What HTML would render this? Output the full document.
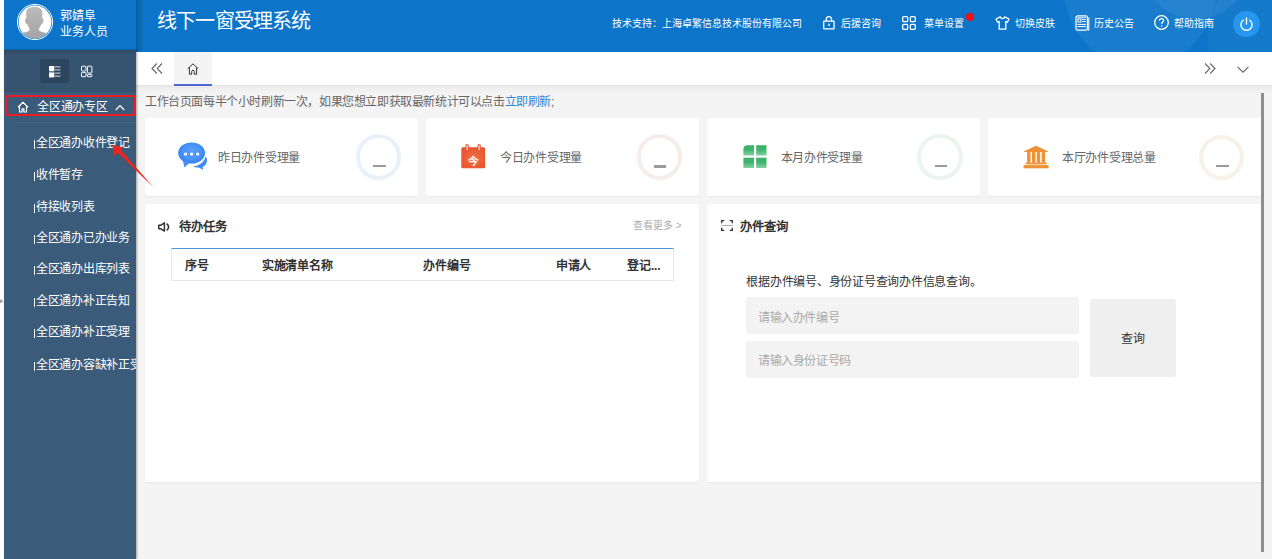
<!DOCTYPE html>
<html lang="zh-CN"><head><meta charset="utf-8">
<style>
*{margin:0;padding:0;box-sizing:border-box;}
html,body{width:1272px;height:559px;overflow:hidden;background:#fff;font-family:"Liberation Sans",sans-serif;position:relative;}
.abs{position:absolute;}
svg{position:absolute;overflow:visible;}
#hdr{position:absolute;left:4px;top:0;width:1268px;height:52px;background:#0c75c9;overflow:hidden;}
#side{position:absolute;left:4px;top:50px;width:132px;height:509px;background:#3a5b79;overflow:hidden;box-shadow:1px 0 2px rgba(0,0,0,0.35);z-index:2;}
#tabs{position:absolute;left:136px;top:52px;width:1136px;height:33px;background:#fff;z-index:1;}
#main{position:absolute;left:136px;top:85px;width:1136px;height:474px;background:#f4f4f4;overflow:hidden;}
.t{position:absolute;white-space:nowrap;line-height:1;}
.hw{color:#fff;font-size:10px;margin-top:1px;}
.mi{position:absolute;left:30px;color:#fff;font-size:12px;letter-spacing:-0.25px;white-space:nowrap;line-height:1;}
.mi:before{content:"";position:absolute;left:0;top:3px;width:1.2px;height:9px;background:#fff;}
.mi span{margin-left:1.8px;}
.card{position:absolute;background:#fff;border-radius:3px;box-shadow:0 1px 1px rgba(0,0,0,0.05);}
.ring{position:absolute;width:45.5px;height:45.5px;border-radius:50%;border:4px solid #e7f1fa;}
.dash{position:absolute;width:12.7px;height:2.6px;background:#9a9a9a;}
.ct{position:absolute;font-size:12px;letter-spacing:-0.3px;color:#666;white-space:nowrap;line-height:1;}
.th{position:absolute;font-size:12px;letter-spacing:-0.2px;color:#333;font-weight:bold;white-space:nowrap;line-height:1;}
</style></head><body>
<div class="abs" style="left:0;top:0;width:4px;height:559px;background:#fdfdfd;"></div>
<div id="hdr">
  <div class="abs" style="left:1060px;top:-86px;width:152px;height:152px;border-radius:50%;background:rgba(255,255,255,0.055);"></div>
  <div class="abs" style="left:1204px;top:-44px;width:168px;height:168px;border-radius:50%;background:rgba(255,255,255,0.045);"></div>
  <div class="abs" style="left:1138px;top:-89px;width:108px;height:108px;border-radius:50%;background:rgba(255,255,255,0.06);"></div>
  <div class="abs" style="left:132px;top:0;width:8px;height:51px;background:linear-gradient(to right,rgba(0,0,0,0.2),rgba(0,0,0,0));"></div>
  <svg style="left:12px;top:3px" width="38" height="38" viewBox="0 0 38 38">
    <defs><linearGradient id="sg" x1="0" y1="0" x2="0" y2="1"><stop offset="0" stop-color="#bababa"/><stop offset="1" stop-color="#9f9f9f"/></linearGradient>
    <clipPath id="ac"><circle cx="19" cy="19" r="16.2"/></clipPath></defs>
    <circle cx="19" cy="19" r="17.6" fill="none" stroke="#fff" stroke-width="1"/>
    <circle cx="19" cy="19" r="16.4" fill="#fff"/>
    <g clip-path="url(#ac)"><g transform="translate(-16,-3)" fill="url(#sg)">
      <path d="M26.2 13.5C26.2 8.6 29.5 7 34.3 7S42.4 8.6 42.4 13.5L42.2 18.5C43.8 18.5 43.8 20.5 43 22.5 42.5 23.5 41.8 24 41.3 24 40.5 26.5 39.5 28 38.8 29L39 30.5C41 32 45 32.5 47 33.5L52 45H17L21.5 33.5C23.5 32.5 27.5 32 29.5 30.5L29.7 29C29 28 28 26.5 27.3 24 26.8 24 26 23.5 25.5 22.5 24.8 20.5 24.9 18.5 26.4 18.5z"/>
    </g></g>
  </svg>
  <div class="t" style="left:56px;top:7.5px;font-size:12px;color:#fff;line-height:16px;">郭婧阜<br>业务人员</div>
  <div class="t" style="left:153px;top:10.5px;font-size:20px;letter-spacing:-0.8px;color:#fff;">线下一窗受理系统</div>

  <div class="t hw" style="left:608px;top:17.5px;">技术支持：上海卓繁信息技术股份有限公司</div>
  <svg style="left:819px;top:16px" width="12" height="14" viewBox="0 0 12 14">
    <path d="M3.2 5.2V3.6C3.2 2 4.4 0.7 5.9 0.7S8.6 2 8.6 3.6v1.6" fill="none" stroke="#fff" stroke-width="1.3"/>
    <rect x="0.7" y="5.2" width="10.4" height="7.6" rx="0.6" fill="none" stroke="#fff" stroke-width="1.3"/>
    <rect x="5.3" y="7.6" width="1.3" height="2.4" fill="#fff"/>
  </svg>
  <div class="t hw" style="left:837px;top:17.5px;">后援咨询</div>
  <svg style="left:898px;top:16px" width="14" height="14" viewBox="0 0 14 14">
    <g fill="none" stroke="#fff" stroke-width="1.3">
    <rect x="0.65" y="0.65" width="5" height="5" rx="1.2"/><rect x="8.35" y="0.65" width="5" height="5" rx="1.2"/>
    <rect x="0.65" y="8.35" width="5" height="5" rx="1.2"/><rect x="8.35" y="8.35" width="5" height="5" rx="1.2"/></g>
  </svg>
  <div class="t hw" style="left:919.5px;top:17.5px;">菜单设置</div>
  <div class="abs" style="left:962.3px;top:13px;width:8px;height:8px;border-radius:50%;background:#f80e0e;"></div>
  <svg style="left:990.5px;top:16px" width="15" height="14" viewBox="0 0 15 14">
    <path d="M5.2 0.8C5.6 2 6.4 2.7 7.5 2.7S9.4 2 9.8 0.8L14 3l-1.6 3.3-1.6-.8v7.7H4.2V5.5l-1.6.8L1 3z" fill="none" stroke="#fff" stroke-width="1.3" stroke-linejoin="round"/>
  </svg>
  <div class="t hw" style="left:1010.7px;top:17.5px;">切换皮肤</div>
  <svg style="left:1070.5px;top:15px" width="16" height="16" viewBox="0 0 16 16">
    <g fill="none" stroke="#fff">
      <rect x="1" y="0.9" width="11.4" height="14.3" rx="1.6" stroke-width="1.2"/>
      <path d="M13.8 2.6v11.6a1 1 0 0 1-1 1" stroke-width="1.1"/>
      <path d="M2.4 2.7h8.6" stroke-width="0.9"/>
      <rect x="2.9" y="4.1" width="3" height="2.9" stroke-width="1"/>
      <path d="M7 4.5h3.8M7 6.6h3.8" stroke-width="0.9"/>
      <path d="M2.4 9.4h8.6M2.4 11.6h8.6" stroke-width="1"/>
    </g>
  </svg>
  <div class="t hw" style="left:1090px;top:17.5px;">历史公告</div>
  <svg style="left:1150px;top:15.4px" width="15" height="15" viewBox="0 0 15 15">
    <circle cx="7.5" cy="7.5" r="6.8" fill="none" stroke="#fff" stroke-width="1.3"/>
    <path d="M5.4 5.7c0-1.3 1-2.1 2.1-2.1s2.1.8 2.1 2c0 1.6-2 1.7-2 3.3" fill="none" stroke="#fff" stroke-width="1.3"/>
    <circle cx="7.6" cy="11" r="0.8" fill="#fff"/>
  </svg>
  <div class="t hw" style="left:1170px;top:17.5px;">帮助指南</div>
  <div class="abs" style="left:1229px;top:10.5px;width:26.5px;height:26.5px;border-radius:50%;background:#2696ee;"></div>
  <svg style="left:1235px;top:16.5px" width="15" height="15" viewBox="0 0 15 15">
    <path d="M4.2 3.2A5.6 5.6 0 1 0 10.8 3.2" fill="none" stroke="#fff" stroke-width="1.4" stroke-linecap="round"/>
    <path d="M7.5 1v6" stroke="#fff" stroke-width="1.4" stroke-linecap="round"/>
  </svg>
</div>

<div id="side">
  <div class="abs" style="left:0;top:0;width:132px;height:42px;background:#36546f;"></div>
  <div class="abs" style="left:0;top:0;width:132px;height:5px;background:linear-gradient(rgba(0,0,0,0.14),rgba(0,0,0,0));"></div>
  <div class="abs" style="left:36px;top:9px;width:29px;height:24px;border-radius:3px;background:#2c4660;"></div>
  <svg style="left:44.7px;top:15.6px" width="12" height="12" viewBox="0 0 12 12">
    <rect x="0" y="0" width="5.3" height="5.3" fill="#fff"/><rect x="0" y="6.4" width="5.3" height="5" fill="#fff"/>
    <g fill="#d8dde2"><rect x="5.8" y="0.4" width="5.6" height="1"/><rect x="5.8" y="3.4" width="5.6" height="1"/><rect x="5.8" y="6.6" width="5.6" height="1"/><rect x="5.8" y="9.6" width="5.6" height="1"/></g>
  </svg>
  <svg style="left:77px;top:15px" width="12" height="13" viewBox="0 0 12 13">
    <g fill="none" stroke="#fff" stroke-width="1"><rect x="0.5" y="1.2" width="4.5" height="4.8" rx="0.7"/><rect x="0.5" y="7.4" width="4.5" height="4.3" rx="0.7"/><rect x="6.4" y="1.2" width="4.5" height="6.8" rx="0.7"/><rect x="6.4" y="9.4" width="4.5" height="2.3" rx="0.7"/></g>
  </svg>
  <div class="abs" style="left:1px;top:45px;width:131px;height:20.5px;border:2px solid #ed1c24;border-radius:3px;"></div>
  <svg style="left:13px;top:50.5px" width="12" height="12" viewBox="0 0 12 12">
    <path d="M1 6.2L6 1.3l5 4.9M2.5 4.8v6.2h2.6V7.8h1.8v3.2h2.6V4.8" fill="none" stroke="#fff" stroke-width="1.2" stroke-linejoin="round"/>
  </svg>
  <div class="t" style="left:33px;top:51.2px;font-size:12px;letter-spacing:-0.2px;color:#fff;">全区通办专区</div>
  <svg style="left:111px;top:53.5px" width="10" height="7" viewBox="0 0 10 7">
    <path d="M0.8 6L5 1.6 9.2 6" fill="none" stroke="#fff" stroke-width="1.2"/>
  </svg>
  <div class="abs" style="left:13px;top:72px;width:119px;height:1px;background:#46657f;"></div>
  <div class="mi" style="top:87.2px"><span>全区通办收件登记</span></div>
  <div class="mi" style="top:118.8px"><span>收件暂存</span></div>
  <div class="mi" style="top:150.5px"><span>待接收列表</span></div>
  <div class="mi" style="top:182.1px"><span>全区通办已办业务</span></div>
  <div class="mi" style="top:213.4px"><span>全区通办出库列表</span></div>
  <div class="mi" style="top:245.3px"><span>全区通办补正告知</span></div>
  <div class="mi" style="top:276.4px"><span>全区通办补正受理</span></div>
  <div class="mi" style="top:308.6px"><span>全区通办容缺补正受理</span></div>
</div>

<div id="tabs">
  <svg style="left:15px;top:11px" width="12" height="11" viewBox="0 0 12 11">
    <path d="M5.8 0.5L1 5.5l4.8 5M11 0.5L6.2 5.5l4.8 5" fill="none" stroke="#666" stroke-width="1.1"/>
  </svg>
  <div class="abs" style="left:37.6px;top:0;width:38.2px;height:34px;background:#f4f4f4;"></div>
  <div class="abs" style="left:37.6px;top:31.8px;width:38.2px;height:1.9px;background:#5066d2;"></div>
  <svg style="left:51px;top:10.8px" width="12" height="12" viewBox="0 0 12 12">
    <path d="M0.7 5.8L6 0.8l5.3 5M2.4 4.4v6.8h2.3V8.6a1.3 1.3 0 0 1 2.6 0v2.6h2.3V4.4" fill="none" stroke="#333" stroke-width="1" stroke-linejoin="round"/>
  </svg>
  <svg style="left:1068px;top:11px" width="12" height="11" viewBox="0 0 12 11">
    <path d="M1 0.5l4.8 5-4.8 5M6.2 0.5l4.8 5-4.8 5" fill="none" stroke="#666" stroke-width="1.1"/>
  </svg>
  <svg style="left:1101px;top:13.8px" width="12" height="7" viewBox="0 0 12 7">
    <path d="M0.5 0.8L6 6.2 11.5 0.8" fill="none" stroke="#666" stroke-width="1.1"/>
  </svg>
</div>

<div id="main">
  <div class="abs" style="left:0;top:0;width:1136px;height:9px;background:linear-gradient(#e6e6e6,#eeeeee 35%,#f4f4f4);"></div>
  <div class="t" style="left:9px;top:10.5px;font-size:12px;letter-spacing:-0.4px;color:#666;">工作台页面每半个小时刷新一次，如果您想立即获取最新统计可以点击<span style="color:#2f86db">立即刷新</span>;</div>

  <!-- cards -->
  <div class="card" style="left:9px;top:32.5px;width:273px;height:78.2px;">
    <svg style="left:33px;top:23.5px" width="30" height="30" viewBox="0 0 30 30">
      <defs><radialGradient id="cb" cx="0.5" cy="0.45" r="0.55"><stop offset="0" stop-color="#5aa0fb"/><stop offset="0.6" stop-color="#4a93f8"/><stop offset="1" stop-color="#3381f2"/></radialGradient></defs>
      <path d="M27.6 15.5c1.4 1.5 1.6 3.6 1.2 5.5-.6 2.6-2.5 4.2-4.2 5l.8 3-4.6-2.6c-2.2.2-4.2-.1-6-.8 5.6-.5 11.3-3.9 12.8-10.1z" fill="#3d8af5"/>
      <ellipse cx="13.6" cy="12" rx="13.4" ry="10.5" fill="url(#cb)"/>
      <path d="M4.8 19.2L6.5 26.5 11.8 21.6z" fill="#4490f6"/>
      <circle cx="7.6" cy="13.1" r="1.6" fill="#fff"/><circle cx="13.6" cy="13.1" r="1.6" fill="#fff"/><circle cx="19.7" cy="13.1" r="1.6" fill="#fff"/>
    </svg>
    <div class="ct" style="left:73px;top:34px;">昨日办件受理量</div>
    <div class="ring" style="left:210.8px;top:16.8px;border-color:#e8f1fa;"></div>
    <div class="dash" style="left:228.2px;top:47.1px;"></div>
  </div>
  <div class="card" style="left:290px;top:32.5px;width:273px;height:78.2px;">
    <svg style="left:35.4px;top:26px" width="25" height="25" viewBox="0 0 25 25">
      <defs><radialGradient id="cg" cx="0.5" cy="0.55" r="0.5"><stop offset="0" stop-color="#f07650"/><stop offset="1" stop-color="#e9552e"/></radialGradient></defs>
      <rect x="0.3" y="3.2" width="23.8" height="21" rx="1.5" fill="url(#cg)"/>
      <rect x="5" y="0.5" width="2.2" height="6" rx="1.1" fill="#fff" stroke="#ea5a32" stroke-width="1.2"/>
      <rect x="17" y="0.5" width="2.2" height="6" rx="1.1" fill="#fff" stroke="#ea5a32" stroke-width="1.2"/>
      <text x="12.2" y="20.6" font-size="10.5" font-weight="bold" fill="#fff" text-anchor="middle">今</text>
    </svg>
    <div class="ct" style="left:74px;top:34px;">今日办件受理量</div>
    <div class="ring" style="left:210.5px;top:16.9px;border-color:#f5edec;"></div>
    <div class="dash" style="left:227.5px;top:47.6px;"></div>
  </div>
  <div class="card" style="left:571px;top:32.5px;width:272.5px;height:78.2px;">
    <svg style="left:35.5px;top:27.5px" width="24" height="24" viewBox="0 0 24 24">
      <defs><linearGradient id="gg" x1="0" y1="0" x2="0" y2="1"><stop offset="0" stop-color="#3cb16a"/><stop offset="0.45" stop-color="#40b46e"/><stop offset="1" stop-color="#86cfa2"/></linearGradient></defs>
      <g fill="url(#gg)"><path d="M4.5 0.2H11v10.3H0.4V4.3A4.1 4.1 0 0 1 4.5 0.2z"/><rect x="13.2" y="0.2" width="10.3" height="10.3"/><rect x="0.4" y="12.7" width="10.6" height="10.3"/><rect x="13.2" y="12.7" width="10.3" height="10.3"/></g>
    </svg>
    <div class="ct" style="left:73.5px;top:34px;">本月办件受理量</div>
    <div class="ring" style="left:210.3px;top:16.8px;border-color:#ebf4ee;"></div>
    <div class="dash" style="left:227.6px;top:47.3px;"></div>
  </div>
  <div class="card" style="left:852px;top:32.5px;width:275px;height:78.2px;">
    <svg style="left:34.5px;top:27px" width="26" height="24" viewBox="0 0 26 24">
      <g fill="#ee9234"><path d="M1 6.2L13 0.7 25 6.2 24.4 7.1H1.6z"/><rect x="4.1" y="7.1" width="3.4" height="10.6"/><rect x="9" y="7.1" width="3.4" height="10.6"/><rect x="13.8" y="7.1" width="3.4" height="10.6"/><rect x="18.7" y="7.1" width="3.4" height="10.6"/><rect x="2.6" y="17.5" width="21" height="1.9"/><rect x="0.6" y="20.1" width="25" height="3.2"/></g>
    </svg>
    <div class="ct" style="left:74px;top:34px;">本厅办件受理总量</div>
    <div class="ring" style="left:210.5px;top:17px;border-color:#f7f1e8;"></div>
    <div class="dash" style="left:228px;top:47.3px;"></div>
  </div>

  <!-- panels -->
  <div class="card" style="left:9px;top:119.3px;width:553.8px;height:277.5px;border-radius:2px;">
    <svg style="left:13px;top:17.5px" width="12" height="10" viewBox="0 0 12 10">
      <path d="M0.8 3.2h2.2L6.4 0.9v8.2L3 6.8H0.8z" fill="none" stroke="#333" stroke-width="1.5" stroke-linejoin="round"/>
      <path d="M8.6 1.6c1.3.8 2 2 2 3.4s-.7 2.6-2 3.4" fill="none" stroke="#333" stroke-width="1.6"/>
    </svg>
    <div class="t" style="left:33.5px;top:17px;font-size:12.3px;color:#333;font-weight:bold;">待办任务</div>
    <div class="t" style="left:488px;top:16.8px;font-size:10px;color:#aaa;">查看更多 &gt;</div>
    <div class="abs" style="left:25.5px;top:44px;width:503.5px;height:33px;border:1px solid #e6e6e6;border-top:1.5px solid #4e96d8;"></div>
    <div class="th" style="left:39.8px;top:55.3px;">序号</div>
    <div class="th" style="left:116.9px;top:55.3px;">实施清单名称</div>
    <div class="th" style="left:278.2px;top:55.3px;">办件编号</div>
    <div class="th" style="left:410.8px;top:55.3px;">申请人</div>
    <div class="th" style="left:482.3px;top:55.3px;">登记...</div>
  </div>
  <div class="card" style="left:571px;top:119.3px;width:556px;height:277.5px;border-radius:2px;">
    <svg style="left:13.5px;top:16px" width="12" height="11" viewBox="0 0 12 11">
      <path d="M0.7 3.2V0.6h2.6M8.7 0.6h2.6v2.6M11.3 7.8v2.6H8.7M3.3 10.4H0.7V7.8" fill="none" stroke="#333" stroke-width="1.3"/>
      <path d="M0 5.5h12" stroke="#b5b5b5" stroke-width="1.1"/>
    </svg>
    <div class="t" style="left:33.3px;top:17px;font-size:12.4px;color:#333;font-weight:bold;">办件查询</div>
    <div class="t" style="left:39.3px;top:72px;font-size:12px;letter-spacing:-0.25px;color:#333;">根据办件编号、身份证号查询办件信息查询。</div>
    <div class="abs" style="left:39px;top:93px;width:333px;height:37px;border-radius:3px;background:#f3f3f3;"></div>
    <div class="abs" style="left:39px;top:136.5px;width:333px;height:37px;border-radius:3px;background:#f3f3f3;"></div>
    <div class="t" style="left:51px;top:108px;font-size:12px;letter-spacing:-0.4px;color:#aaa;">请输入办件编号</div>
    <div class="t" style="left:51px;top:150.5px;font-size:12px;letter-spacing:-0.4px;color:#aaa;">请输入身份证号码</div>
    <div class="abs" style="left:383.3px;top:94.5px;width:85.5px;height:77.8px;border-radius:3px;background:#efefef;"></div>
    <div class="t" style="left:414px;top:128.7px;font-size:12px;color:#333;">查询</div>
  </div>
  <div class="abs" style="left:1125px;top:8px;width:3px;height:459px;background:#8e8e8e;"></div>
</div>

<svg style="left:0;top:0;z-index:5" width="1272" height="559" viewBox="0 0 1272 559">
  <path d="M112.5 144.8L114.3 156.2 117.6 152.4 153.6 187.6 120.4 149.6 123 147.6z" fill="#f0241b"/>
  <path d="M0.3 299.3L3 301.3 0.3 303.3z" fill="#808080"/>
</svg>
</body></html>
